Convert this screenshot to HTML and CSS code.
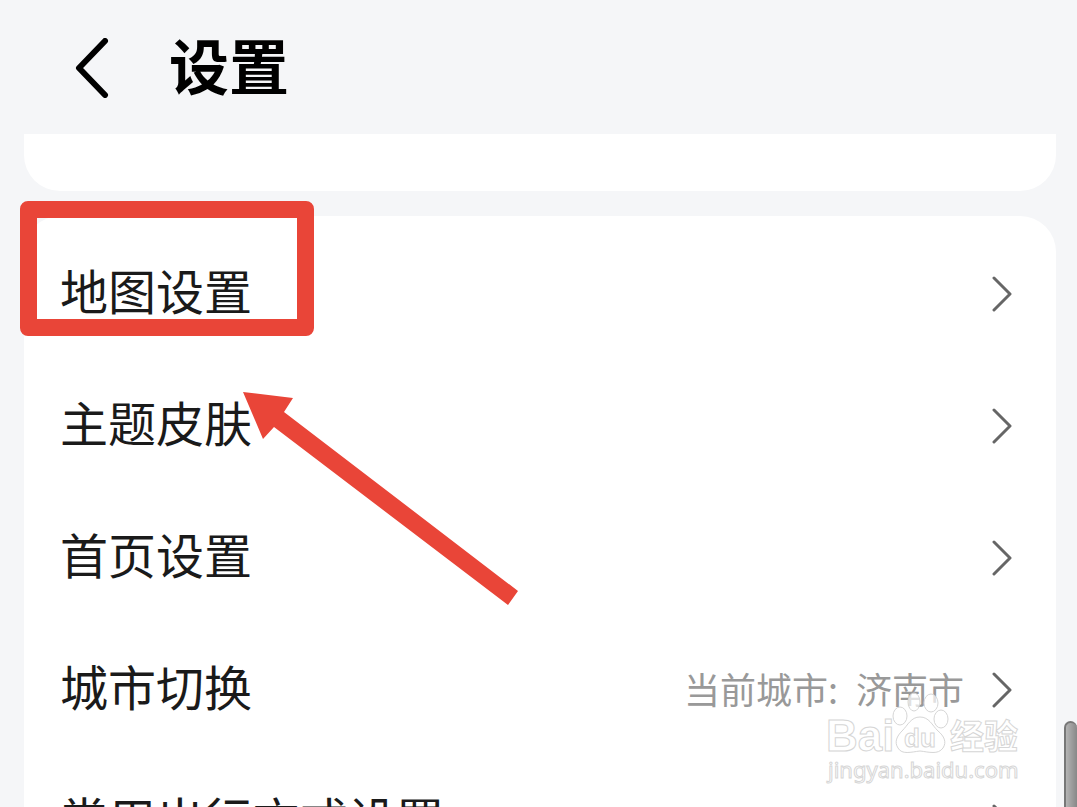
FILE: index.html
```html
<!DOCTYPE html>
<html lang="zh-CN">
<head>
    <meta charset="UTF-8">
    <meta name="viewport" content="width=device-width, initial-scale=1">
    <title>设置</title>
    <link rel="stylesheet" href="styles.css">
</head>
<body>
<header class="header">
    <button class="back" type="button" aria-label="返回">
        <svg width="34" height="60" viewBox="0 0 34 60"><path d="M30 3L4 30L30 57"/></svg>
    </button>
    <h1 class="title">设置</h1>
</header>
<main class="main">
    <div class="card card-prev"></div>
    <div class="card card-list">
        <ul class="list">
            <li><a class="row" href="#">
                <span class="name">地图设置</span>
                <svg class="arrow" width="20" height="36" viewBox="0 0 20 36"><path d="M2 2L18 18L2 34"/></svg>
            </a></li>
            <li><a class="row" href="#">
                <span class="name">主题皮肤</span>
                <svg class="arrow" width="20" height="36" viewBox="0 0 20 36"><path d="M2 2L18 18L2 34"/></svg>
            </a></li>
            <li><a class="row" href="#">
                <span class="name">首页设置</span>
                <svg class="arrow" width="20" height="36" viewBox="0 0 20 36"><path d="M2 2L18 18L2 34"/></svg>
            </a></li>
            <li><a class="row" href="#">
                <span class="name">城市切换</span>
                <span class="value"><span>当前城市:</span><span>济南市</span></span>
                <svg class="arrow" width="20" height="36" viewBox="0 0 20 36"><path d="M2 2L18 18L2 34"/></svg>
            </a></li>
            <li><a class="row" href="#">
                <span class="name">常用出行方式设置</span>
                <svg class="arrow" width="20" height="36" viewBox="0 0 20 36"><path d="M2 2L18 18L2 34"/></svg>
            </a></li>
        </ul>
        <!-- 红框和箭头标注 -->
        <div class="mark-box"></div>
        <svg class="mark-arrow" width="276" height="214" viewBox="0 0 276 214">
            <path d="M0 0L50 6L41 20L275 199L265 213L31 35L20 47Z"/>
        </svg>
    </div>
</main>
<!-- 水印 -->
<svg class="logo" width="204" height="100" viewBox="0 0 204 100">
    <ellipse cx="80" cy="28" rx="7" ry="9"/>
    <ellipse cx="94" cy="14" rx="6" ry="9"/>
    <ellipse cx="111" cy="15" rx="7" ry="9"/>
    <ellipse cx="121" cy="31" rx="7" ry="9"/>
    <path d="M100 29C109 29 112 37 118 43C124 48 127 54 123 60C118 67 109 64 100 63C91 64 82 67 78 60C74 54 77 48 82 43C88 37 91 29 100 29Z"/>
    <text class="logo-bai" x="6" y="63">Bai</text>
    <text class="logo-du" x="84" y="59">du</text>
    <text class="logo-cn" x="130" y="61">经验</text>
    <text class="logo-url" x="8" y="90">jingyan.baidu.com</text>
</svg>
<div class="scroll"></div>
</body>
</html>
```

FILE: styles.css
```css
*{
    margin: 0;
    padding: 0;
    list-style: none;
    box-sizing: border-box;
}
body{
    position: relative;
    height: 100vh;
    overflow: hidden;
    background-color: #f5f6f8;
    color: #1a1a1a;
    font-family: "Noto Sans CJK SC", sans-serif;
}
.header{
    display: flex;
    align-items: center;
    gap: 60px;
    height: 134px;
    padding: 2px 75px 0;
}
.back{
    display: flex;
    border: none;
    background: none;
    cursor: pointer;
}
.back path{
    fill: none;
    stroke: #000;
    stroke-width: 6;
    stroke-linecap: round;
    stroke-linejoin: round;
}
.title{
    padding-bottom: 8px;
    color: #000;
    font-size: 60px;
    line-height: 80px;
    font-weight: bold;
}
.main{
    display: flex;
    flex-direction: column;
    gap: 25px;
    padding: 0 21px 0 24px;
}
.card{
    background-color: #fff;
}
.card-prev{
    height: 57px;
    border-radius: 0 0 36px 36px;
}
.card-list{
    position: relative;
    padding: 12px 0;
    border-radius: 36px;
}
.row{
    display: flex;
    align-items: center;
    gap: 28px;
    height: 132px;
    padding: 0 44px 0 36px;
    color: inherit;
    text-decoration: none;
}
.name{
    flex: 1;
    padding-bottom: 10px;
    font-size: 48px;
    line-height: 72px;
}
.value{
    display: flex;
    gap: 18px;
    padding-bottom: 4px;
    color: #999;
    font-size: 36px;
    line-height: 54px;
}
.arrow path{
    fill: none;
    stroke: #666;
    stroke-width: 3;
    stroke-linecap: round;
    stroke-linejoin: round;
}
.mark-box{
    position: absolute;
    top: -15px;
    left: -4px;
    width: 294px;
    height: 135px;
    border: 17px solid #e94538;
    border-radius: 8px;
}
.mark-arrow{
    position: absolute;
    top: 176px;
    left: 219px;
    fill: #e94538;
}
.logo{
    position: absolute;
    right: 53px;
    bottom: 19px;
    fill: #fff;
    fill-opacity: 0.7;
    stroke: #d6d6d6;
    stroke-width: 1;
}
.logo text{
    font-family: "Liberation Sans", "Noto Sans CJK SC", sans-serif;
    font-weight: bold;
}
.logo .logo-bai{
    font-size: 44px;
}
.logo .logo-du{
    font-size: 26px;
}
.logo .logo-cn{
    font-size: 34px;
}
.logo .logo-url{
    font-family: "Noto Sans", sans-serif;
    font-size: 22px;
    font-weight: normal;
}
.scroll{
    position: absolute;
    right: 0;
    bottom: 0;
    width: 13px;
    height: 86px;
    border: 2px solid #777;
    border-width: 2px 0 0 2px;
    border-radius: 7px 7px 0 0;
    background: linear-gradient(to right, #b4b4b4, #888);
}
```
